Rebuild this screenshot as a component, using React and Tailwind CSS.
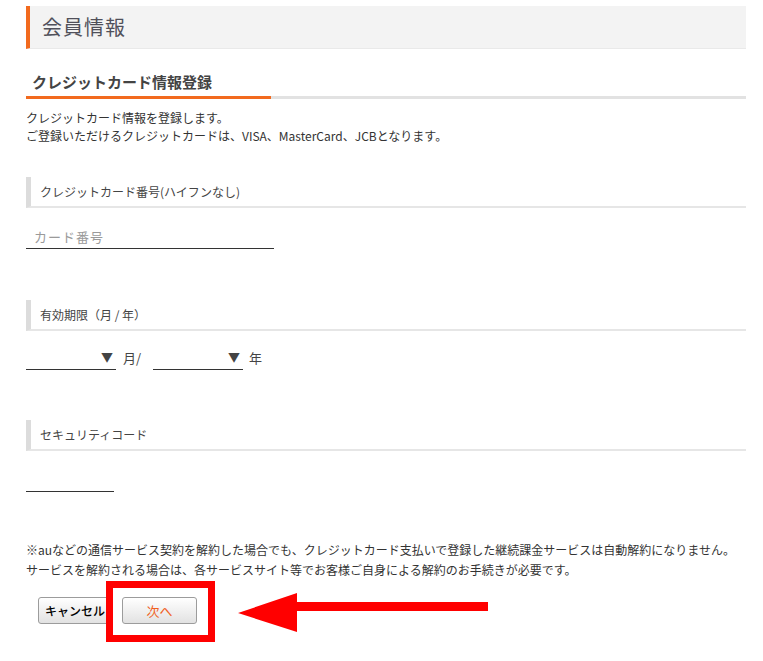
import React from "react";

const font = { fontFamily: '"Noto Sans CJK JP", "Noto Sans", sans-serif' };

const SectionLabel = ({ children, className = "" }) => (
  <div
    className={`h-[31px] flex items-center border-l-[5px] border-l-[#dcdcdc] border-b-2 border-b-[#e6e6e6] pl-[9px] text-[12px] text-[#444] ${className}`}
  >
    {children}
  </div>
);

const SelectBox = ({ className = "" }) => (
  <div
    className={`w-[90px] h-[25px] border-b border-[#333] flex items-center justify-end pr-[3px] ${className}`}
  >
    <span className="text-[12px] leading-none text-[#444]">▼</span>
  </div>
);

const App = () => {
  return (
    <div className="bg-white min-h-screen pt-[6px] pl-[26px]" style={font}>
      <div className="w-[720px]">
        {/* 見出し */}
        <div className="h-[43px] bg-[#f3f3f3] border-l-4 border-l-[#f26a1e] border-b border-b-[#e9e9e9] flex items-center pl-[12px]">
          <h1 className="text-[20px] text-[#50505a] tracking-[1px]">会員情報</h1>
        </div>

        <div className="mt-[21px]">
          <h2 className="h-[24px] leading-[24px] pl-[6px] text-[15px] font-bold text-[#444]">
            クレジットカード情報登録
          </h2>
          <div className="flex h-[3px] mt-[2px]">
            <div className="w-[245px] bg-[#f26a1e]" />
            <div className="flex-1 bg-[#e2e2e2]" />
          </div>
        </div>

        <div className="mt-[10px] text-[12px] leading-[18px] text-[#333]">
          <p>クレジットカード情報を登録します。</p>
          <p>ご登録いただけるクレジットカードは、VISA、MasterCard、JCBとなります。</p>
        </div>

        <SectionLabel className="mt-[32px]">クレジットカード番号(ハイフンなし)</SectionLabel>
        <div className="mt-[17px] w-[248px] h-[24px] border-b border-[#333] flex items-center pl-[8px]">
          <span className="text-[13px] tracking-[1px] text-[#9a9a9a]">カード番号</span>
        </div>

        <SectionLabel className="mt-[51px]">有効期限（月 / 年）</SectionLabel>
        <div className="mt-[14px] flex items-center text-[13px] text-[#444]">
          <SelectBox />
          <span className="ml-[7px] mr-[12px]">月/</span>
          <SelectBox />
          <span className="ml-[6px]">年</span>
        </div>

        <SectionLabel className="mt-[50px]">セキュリティコード</SectionLabel>
        <div className="mt-[17px] w-[88px] h-[24px] border-b border-[#333]" />

        <div className="mt-[48px] text-[12px] leading-[20px] text-[#333]">
          <p>
            ※auなどの通信サービス契約を解約した場合でも、クレジットカード支払いで登録した継続課金サービスは自動解約になりません。
          </p>
          <p>サービスを解約される場合は、各サービスサイト等でお客様ご自身による解約のお手続きが必要です。</p>
        </div>

        <div className="relative mt-[17px] pl-[12px] flex items-center gap-[10px]">
          <button className="w-[74px] h-[27px] rounded-[3px] border border-[#9c9c9c] bg-linear-to-b from-white to-[#e2e2e2] text-[12px] font-medium text-black">
            キャンセル
          </button>
          <button className="w-[75px] h-[27px] rounded-[3px] border border-[#9c9c9c] bg-linear-to-b from-white to-[#e2e2e2] text-[13px] text-[#f0601e]">
            次へ
          </button>

          {/* 注釈の赤枠と矢印 */}
          <div className="absolute left-[80px] top-[-16px] w-[109px] h-[61px] border-[7px] border-[#ff0000]" />
          <svg
            className="absolute left-[210px] top-[-6px]"
            width="254"
            height="43"
            viewBox="0 0 254 43"
          >
            <polygon points="2,22 61,2 61,11 252,11 252,20 61,20 61,41" fill="#ff0000" />
          </svg>
        </div>
      </div>
    </div>
  );
};

export default App;
